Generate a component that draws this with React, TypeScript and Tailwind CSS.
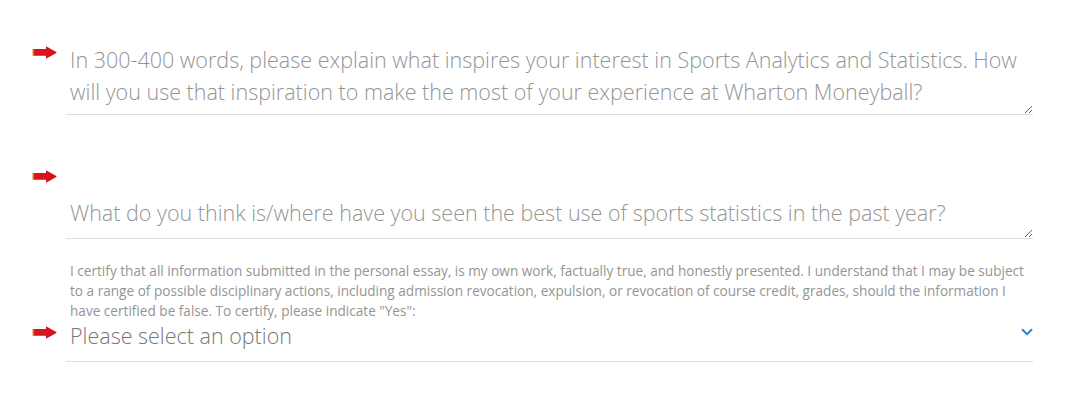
import React from "react";

function RequiredArrow({ className = "" }: { className?: string }) {
  return (
    <svg
      width="25"
      height="13"
      viewBox="0 0 25 13"
      className={className}
      aria-hidden="true"
    >
      <defs>
        <linearGradient id="arrowFill" x1="0" x2="1" y1="0" y2="0">
          <stop offset="0" stopColor="#e98a2c" />
          <stop offset="0.1" stopColor="#d8161f" />
          <stop offset="1" stopColor="#d3121b" />
        </linearGradient>
      </defs>
      <path
        d="M0.5 3 H14 V0.2 L24.3 6 Q24.7 6.5 24.3 7 L14 12.8 V9.8 H0.5 Z"
        fill="url(#arrowFill)"
      />
    </svg>
  );
}

const field =
  "block w-full border-0 border-b border-[#dcdcdc] bg-transparent px-1 text-[21.5px] font-light leading-[32px] text-[#555] outline-none placeholder:text-[#959595]";

export default function App() {
  return (
    <div className="min-h-[407px] bg-white pl-[32px] pr-[47px] pt-[40px] font-['Open_Sans','Liberation_Sans',sans-serif]">
      {/* essay question */}
      <div className="flex">
        <div className="w-[34px] shrink-0">
          <RequiredArrow className="mt-[6px]" />
        </div>
        <textarea
          className={`${field} h-[75px] resize-y pt-1`}
          placeholder="In 300-400 words, please explain what inspires your interest in Sports Analytics and Statistics. How will you use that inspiration to make the most of your experience at Wharton Moneyball?"
        />
      </div>

      {/* best use question */}
      <div className="mt-[49px] flex">
        <div className="w-[34px] shrink-0">
          <RequiredArrow className="mt-[6px]" />
        </div>
        <div className="min-w-0 flex-1">
          <div className="h-[29px]" />
          <textarea
            className={`${field} h-[46px] resize-y pt-1`}
            placeholder="What do you think is/where have you seen the best use of sports statistics in the past year?"
          />
        </div>
      </div>

      {/* certification */}
      <div className="mt-[22px] flex">
        <div className="w-[34px] shrink-0" />
        <p className="flex-1 pl-1 text-[13.6px] leading-[20px] text-[#959595]">
          I certify that all information submitted in the personal essay, is my own work, factually true, and honestly presented. I understand that I may be subject to a range of possible disciplinary actions, including admission revocation, expulsion, or revocation of course credit, grades, should the information I have certified be false. To certify, please indicate "Yes":
        </p>
      </div>

      <div className="flex">
        <div className="w-[34px] shrink-0">
          <RequiredArrow className="mt-[5px]" />
        </div>
        <div className="flex flex-1 cursor-pointer items-start justify-between border-b border-[#dcdcdc] pb-[11px] pl-1 pt-[1px]">
          <span className="text-[21.5px] font-light leading-[28px] text-[#777]">
            Please select an option
          </span>
          <svg
            width="12"
            height="8"
            viewBox="0 0 12 8"
            className="mt-[6px]"
            aria-hidden="true"
          >
            <path
              d="M1 1.2 L6 6.2 L11 1.2"
              fill="none"
              stroke="#2f7fc8"
              strokeWidth="2"
            />
          </svg>
        </div>
      </div>
    </div>
  );
}
